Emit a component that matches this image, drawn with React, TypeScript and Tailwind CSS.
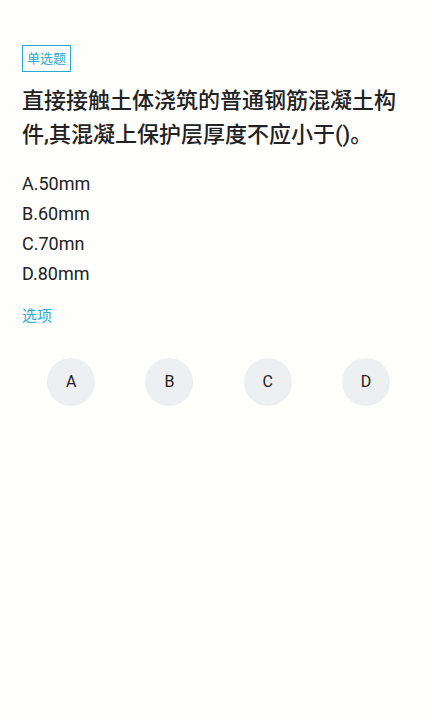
const font = { fontFamily: '"Roboto", "Noto Sans CJK SC", sans-serif' };

const options = ['A.50mm', 'B.60mm', 'C.70mn', 'D.80mm'];
const letters = ['A', 'B', 'C', 'D'];

export default function App() {
  return (
    <div
      className="min-h-[720px] w-full bg-[#fefefc] px-[22px] pt-[45px] text-[#1f1f1f]"
      style={font}
    >
      <div className="flex">
        <span className="border border-[#2aa9d2] px-[4px] py-[3px] text-[13px] leading-[19px] text-[#2aa9d2]">
          单选题
        </span>
      </div>

      <h1 className="mt-[12px] text-[22px] font-medium leading-[34px] text-[#222]">
        直接接触土体浇筑的普通钢筋混凝土构件,其混凝上保护层厚度不应小于()。
      </h1>

      <div className="mt-[17px] flex flex-col">
        {options.map((o) => (
          <div key={o} className="h-[30px] text-[18px] leading-[30px] text-[#222]">
            {o}
          </div>
        ))}
      </div>

      <div className="mt-[16px] text-[15px] leading-[22px] text-[#2aa9d2]">选项</div>

      <div className="mt-[31px] grid w-[393px] grid-cols-4">
        {letters.map((l) => (
          <div key={l} className="flex justify-center">
            <button className="flex h-[48px] w-[48px] items-center justify-center rounded-full bg-[#eeeff1] text-[16px] text-[#222]">
              {l}
            </button>
          </div>
        ))}
      </div>
    </div>
  );
}
